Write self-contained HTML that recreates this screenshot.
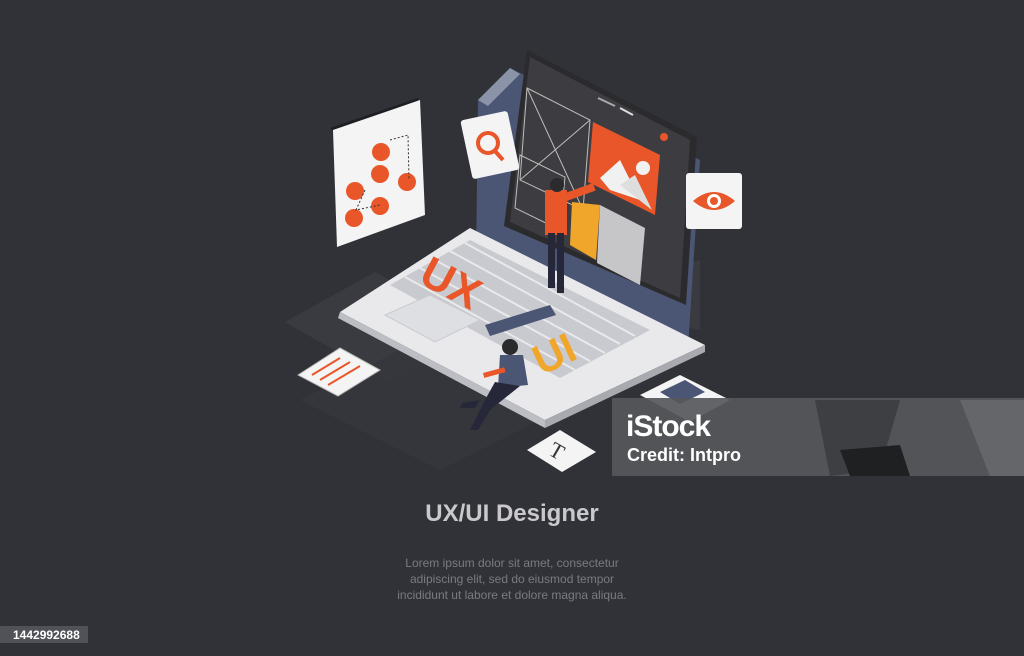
<!DOCTYPE html>
<html><head><meta charset="utf-8"><style>
html,body{margin:0;padding:0;background:#313237;width:1024px;height:656px;overflow:hidden;font-family:"Liberation Sans",sans-serif}
svg{position:absolute;left:0;top:0}
.t{position:absolute;left:0;width:1024px;text-align:center}
</style></head><body>
<svg width="1024" height="656" viewBox="0 0 1024 656">
<rect width="1024" height="656" fill="#313237"/>
<polygon points="285,322 375,272 480,330 390,382" fill="#3a3b40"/>
<polygon points="300,400 420,340 560,410 440,470" fill="#36373c" opacity="0.8"/>
<polygon points="560,300 700,260 700,330" fill="#3a3b40"/>
<polygon points="510,68 700,160 688,348 476,260 478,100" fill="#4a5673"/>
<polygon points="478,100 510,68 520,74 488,106" fill="#8a93a8"/>
<polygon points="527,50 697,137 686,305 504,226" fill="#2b2b2e"/>
<polygon points="530,57 690,140 680,298 510,222" fill="#3d3d41"/>
<polygon points="527,88 590,120 583,210 520,180" fill="none" stroke="#bdbdbd" stroke-width="1"/>
<line x1="527" y1="88" x2="583" y2="210" stroke="#bdbdbd"/><line x1="590" y1="120" x2="520" y2="180" stroke="#bdbdbd"/>
<polygon points="520,155 565,177 560,230 515,208" fill="none" stroke="#bdbdbd"/>
<polygon points="593,122 660,155 655,215 588,182" fill="#e8562a"/>
<polygon points="600,178 620,160 640,200 610,190" fill="#f1f1f1"/>
<polygon points="620,185 635,175 652,210" fill="#dedede"/>
<circle cx="643" cy="168" r="7" fill="#f1f1f1"/>
<polygon points="600,205 645,228 640,285 597,263" fill="#c6c6c8"/>
<polygon points="572,202 600,205 596,260 570,245" fill="#f0a52b"/>
<circle cx="664" cy="137" r="4" fill="#e8562a"/>
<line x1="598" y1="98" x2="615" y2="106" stroke="#aaa" stroke-width="2"/>
<line x1="620" y1="108" x2="633" y2="115" stroke="#ddd" stroke-width="2"/>
<polygon points="340,312 470,228 705,345 545,420" fill="#e9e9ec"/>
<polygon points="340,312 545,420 545,428 338,318" fill="#bdbec4"/>
<polygon points="545,420 705,345 705,352 545,428" fill="#a8aab0"/>
<polygon points="390,285 470,240 650,330 560,378" fill="#c9cacf"/>
<g stroke="#e9e9ec" stroke-width="2">
<line x1="405" y1="277" x2="575" y2="370"/><line x1="420" y1="268" x2="590" y2="361"/><line x1="435" y1="260" x2="605" y2="353"/><line x1="450" y1="251" x2="620" y2="344"/><line x1="465" y1="243" x2="635" y2="336"/>
</g>
<polygon points="385,315 430,295 480,320 435,342" fill="#dedfe3" stroke="#c9cacf"/>
<text x="420" y="300" font-family="Liberation Sans" font-weight="bold" font-size="44" fill="#e8562a" transform="rotate(28 455 285)">UX</text>
<polygon points="485,325 550,305 556,315 490,336" fill="#4a5673"/>
<text x="530" y="365" font-family="Liberation Sans" font-weight="bold" font-size="42" fill="#f0a52b" transform="rotate(-25 560 345)">UI</text>
<rect x="545" y="190" width="22" height="45" fill="#e8562a"/>
<rect x="560" y="195" width="35" height="8" fill="#e8562a" transform="rotate(-20 560 195)"/>
<circle cx="557" cy="185" r="7" fill="#2b2b2e"/>
<rect x="548" y="233" width="7" height="55" fill="#26283a"/><rect x="557" y="233" width="7" height="60" fill="#26283a"/>
<circle cx="510" cy="347" r="8" fill="#2b2b2e"/>
<polygon points="500,355 523,355 528,385 498,388" fill="#4a5673"/>
<polygon points="495,382 520,386 490,410 478,430 470,430 485,400" fill="#26283a"/>
<polygon points="475,408 460,408 462,403 480,400" fill="#26283a"/>
<rect x="483" y="373" width="22" height="5" fill="#e8562a" transform="rotate(-15 483 373)"/>
<polygon points="330,128 418,98 420,103 338,135" fill="#1e1f22"/>
<polygon points="333,130 420,100 425,215 337,247" fill="#f4f4f4"/>
<g fill="#e8562a"><circle cx="381" cy="152" r="9"/><circle cx="380" cy="174" r="9"/><circle cx="355" cy="191" r="9"/><circle cx="407" cy="182" r="9"/><circle cx="380" cy="206" r="9"/><circle cx="354" cy="218" r="9"/></g>
<path d="M390,140 L408,135 L409,180 M365,190 L356,210 L380,205" stroke="#333" stroke-dasharray="2 2" fill="none"/>
<rect x="466" y="115" width="48" height="60" rx="3" fill="#f4f4f4" transform="rotate(-12 490 145)"/>
<circle cx="488" cy="143" r="10" fill="none" stroke="#e8562a" stroke-width="4"/>
<line x1="495" y1="151" x2="503" y2="160" stroke="#e8562a" stroke-width="4"/>
<rect x="686" y="173" width="56" height="56" rx="3" fill="#f4f4f4"/>
<path d="M693,201 Q714,183 735,201 Q714,219 693,201Z" fill="#e8562a"/>
<circle cx="714" cy="201" r="7" fill="#fff"/><circle cx="714" cy="201" r="4" fill="#e8562a"/>
<polygon points="298,375 340,348 380,370 338,396" fill="#f4f4f4" stroke="#bbb"/>
<g stroke="#e8562a" stroke-width="2"><line x1="312" y1="375" x2="340" y2="358"/><line x1="320" y1="380" x2="350" y2="362"/><line x1="328" y1="385" x2="360" y2="366"/></g>
<polygon points="527,450 560,430 596,452 562,472" fill="#f4f4f4"/>
<text x="550" y="460" font-family="Liberation Serif" font-size="22" fill="#333" transform="rotate(30 560 452)">T</text>
<polygon points="640,395 680,375 730,400 690,422" fill="#f4f4f4"/>
<polygon points="660,392 685,380 705,392 680,404" fill="#4a5673"/>
<rect x="612" y="398" width="412" height="78" fill="#55575b" opacity="0.92"/>
<polygon points="815,400 900,400 880,470 830,476" fill="#3e3f42"/>
<polygon points="840,450 900,445 910,476 850,476" fill="#1f2022"/>
<polygon points="960,400 1024,400 1024,476 990,476" fill="#64666a"/>
<text x="626" y="436" font-family="Liberation Sans" font-weight="bold" font-size="30" fill="#fff" letter-spacing="-1">iStock</text>
<text x="627" y="461" font-family="Liberation Sans" font-weight="bold" font-size="18" fill="#fff">Credit: Intpro</text>
<rect x="0" y="626" width="88" height="17" fill="#505257"/>
<text x="13" y="639" font-family="Liberation Sans" font-weight="bold" font-size="12" fill="#fff">1442992688</text>
</svg>
<div class="t" style="top:500px;font-size:24px;font-weight:bold;color:#c9c9cc">UX/UI Designer</div>
<div class="t" style="top:555px;font-size:12px;line-height:16px;color:#7a7b82">Lorem ipsum dolor sit amet, consectetur<br>adipiscing elit, sed do eiusmod tempor<br>incididunt ut labore et dolore magna aliqua.</div>
</body></html>
